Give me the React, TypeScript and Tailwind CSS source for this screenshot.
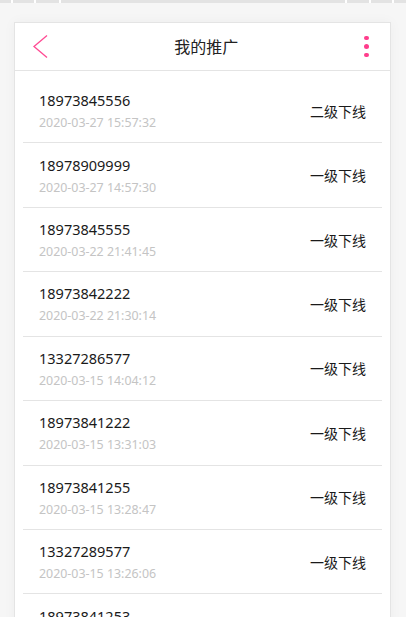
import React from "react";

const rows = [
  { phone: "18973845556", time: "2020-03-27 15:57:32", level: "二级下线" },
  { phone: "18978909999", time: "2020-03-27 14:57:30", level: "一级下线" },
  { phone: "18973845555", time: "2020-03-22 21:41:45", level: "一级下线" },
  { phone: "18973842222", time: "2020-03-22 21:30:14", level: "一级下线" },
  { phone: "13327286577", time: "2020-03-15 14:04:12", level: "一级下线" },
  { phone: "18973841222", time: "2020-03-15 13:31:03", level: "一级下线" },
  { phone: "18973841255", time: "2020-03-15 13:28:47", level: "一级下线" },
  { phone: "13327289577", time: "2020-03-15 13:26:06", level: "一级下线" },
  { phone: "18973841253", time: "2020-03-15 13:20:11", level: "一级下线" },
];

const font = { fontFamily: '"Noto Sans", "Noto Sans CJK SC", sans-serif' };

export default function App(): React.JSX.Element {
  return (
    <div className="h-[617px] w-[406px] overflow-hidden bg-[#f6f6f6]" style={font}>
      {/* top strip */}
      <div className="flex h-[3px] gap-[2px] bg-white">
        <div className="w-[11px] bg-[#e3e3e3]" />
        <div className="w-[21px] bg-[#e3e3e3]" />
        <div className="w-[23px] bg-[#e3e3e3]" />
        <div className="flex-1 bg-[#e3e3e3]" />
        <div className="w-[22px] bg-[#e3e3e3]" />
        <div className="w-[21px] bg-[#e3e3e3]" />
        <div className="w-[12px] bg-[#e3e3e3]" />
      </div>

      <div className="ml-[14px] mt-[19px] w-[377px] border border-[#e4e4e4] bg-white shadow-[0_0_12px_rgba(0,0,0,0.04)]">
        <div className="flex h-[48px] items-center justify-between border-b border-[#e4e4e4] px-[16px]">
          <svg width="16" height="26" viewBox="0 0 16 26" className="ml-[1px]">
            <path d="M15 1.5 L2 12.5 L15 23.5" fill="none" stroke="#ff4a93" strokeWidth="1.3" />
          </svg>
          <div className="text-[16px] text-[#222]">我的推广</div>
          <div className="mr-[5px] flex flex-col gap-[4px]">
            <span className="h-[4.5px] w-[4.5px] rounded-full bg-[#ff3d8c]" />
            <span className="h-[4.5px] w-[4.5px] rounded-full bg-[#ff3d8c]" />
            <span className="h-[4.5px] w-[4.5px] rounded-full bg-[#ff3d8c]" />
          </div>
        </div>

        <div className="px-[8px] pt-[8px]">
          {rows.map((r) => (
            <div
              key={r.phone + r.time}
              className="flex h-[64.43px] items-center justify-between border-b border-[#e4e4e4] pl-[16px] pr-[16px]"
            >
              <div className="flex flex-col">
                <span className="text-[14.5px] leading-[20px] text-[#1a1a1a]">{r.phone}</span>
                <span className="mt-[5px] text-[12.4px] leading-[16px] text-[#c4c4c4]">{r.time}</span>
              </div>
              <span className="mt-[1px] text-[14px] text-[#1a1a1a]">{r.level}</span>
            </div>
          ))}
        </div>
      </div>
    </div>
  );
}
